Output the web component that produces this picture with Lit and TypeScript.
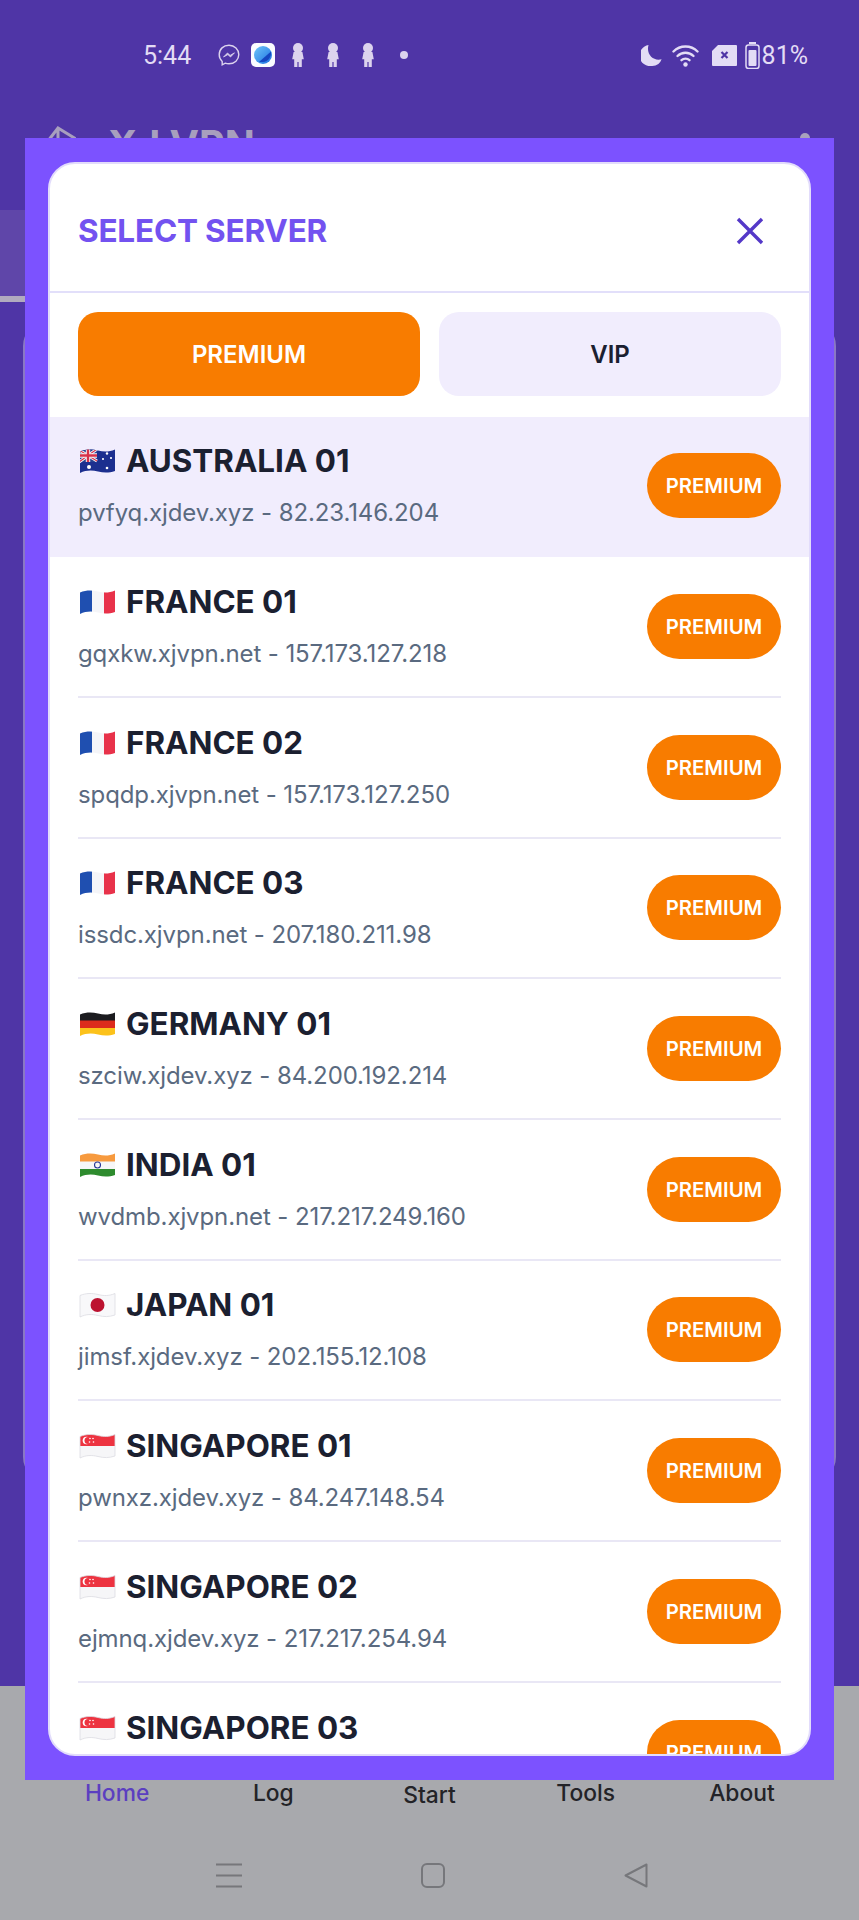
import { LitElement, html, css, svg } from "lit";
import { customElement } from "lit/decorators.js";

type Server = { code: string; name: string; host: string };

const SERVERS: Server[] = [
  { code: "au", name: "AUSTRALIA 01", host: "pvfyq.xjdev.xyz - 82.23.146.204" },
  { code: "fr", name: "FRANCE 01", host: "gqxkw.xjvpn.net - 157.173.127.218" },
  { code: "fr", name: "FRANCE 02", host: "spqdp.xjvpn.net - 157.173.127.250" },
  { code: "fr", name: "FRANCE 03", host: "issdc.xjvpn.net - 207.180.211.98" },
  { code: "de", name: "GERMANY 01", host: "szciw.xjdev.xyz - 84.200.192.214" },
  { code: "in", name: "INDIA 01", host: "wvdmb.xjvpn.net - 217.217.249.160" },
  { code: "jp", name: "JAPAN 01", host: "jimsf.xjdev.xyz - 202.155.12.108" },
  { code: "sg", name: "SINGAPORE 01", host: "pwnxz.xjdev.xyz - 84.247.148.54" },
  { code: "sg", name: "SINGAPORE 02", host: "ejmnq.xjdev.xyz - 217.217.254.94" },
  { code: "sg", name: "SINGAPORE 03", host: "" },
];

const WAVE = "M1 3.5C7 1 13 1 19 2.5S30 4 36 1.5V23C30 25 25 25 19 23.5S7 22 1 25Z";

function flagBody(code: string) {
  switch (code) {
    case "au":
      return svg`<rect width="37" height="26" fill="#1c2f8f"/>
        <rect width="18" height="14" fill="#27408f"/>
        <path d="M0 2L18 13M18 1L0 14" stroke="#f4f4f8" stroke-width="3"/>
        <path d="M0 2L18 13M18 1L0 14" stroke="#d8324a" stroke-width="1.1"/>
        <path d="M9 0V14M0 7.5H18" stroke="#f4f4f8" stroke-width="4.4"/>
        <path d="M9 0V14M0 7.5H18" stroke="#d8324a" stroke-width="2.4"/>
        <circle cx="10" cy="19" r="2" fill="#fff"/><circle cx="28" cy="5.5" r="1.2" fill="#fff"/>
        <circle cx="24" cy="11" r="1.1" fill="#fff"/><circle cx="32" cy="10" r="1.1" fill="#fff"/>
        <circle cx="28" cy="20" r="1.3" fill="#fff"/>`;
    case "fr":
      return svg`<rect width="13" height="26" fill="#1f4fb0"/><rect x="13" width="12" height="26" fill="#f5f5f8"/><rect x="25" width="12" height="26" fill="#e8324a"/>`;
    case "de":
      return svg`<rect width="37" height="10" fill="#1b1b1f"/><rect y="9.5" width="37" height="8" fill="#dd2b1c"/><rect y="17" width="37" height="9" fill="#fcc21b"/>`;
    case "in":
      return svg`<rect width="37" height="10" fill="#f79a3e"/><rect y="9.5" width="37" height="8" fill="#f6f6f8"/><rect y="17" width="37" height="9" fill="#2e8b2e"/><circle cx="18.5" cy="13" r="3" fill="none" stroke="#2a3a9a" stroke-width="1.1"/>`;
    case "jp":
      return svg`<rect width="37" height="26" fill="#f8f8fa"/><circle cx="18.5" cy="13" r="7" fill="#bc1230"/>`;
    default:
      return svg`<rect width="37" height="13.5" fill="#ed3340"/><rect y="13" width="37" height="13" fill="#f6f6f8"/>
        <circle cx="7.5" cy="7.5" r="3.8" fill="#fff"/><circle cx="9" cy="7.5" r="3.5" fill="#ed3340"/>
        <circle cx="11" cy="5.5" r=".8" fill="#fff"/><circle cx="14" cy="5.5" r=".8" fill="#fff"/><circle cx="10.5" cy="9" r=".8" fill="#fff"/><circle cx="14.5" cy="9" r=".8" fill="#fff"/>`;
  }
}

function flag(code: string) {
  const border = code === "jp" || code === "sg";
  return html`<svg class="flag" viewBox="0 0 37 26" width="37" height="26" aria-hidden="true">
    <defs><clipPath id=${"wave-" + code}><path d=${WAVE}></path></clipPath></defs>
    <g clip-path=${"url(#wave-" + code + ")"}>${flagBody(code)}</g>
    ${border ? svg`<path d=${WAVE} fill="none" stroke="#dcdce2" stroke-width=".8"/>` : ""}
  </svg>`;
}

const person = html`<svg class="si" width="16" height="24" viewBox="0 0 16 24" aria-hidden="true">
  <circle cx="8" cy="5" r="5" fill="#dcd3ee"/>
  <path d="M3.6 9h8.8l1.4 7.2h-2V24H8.6v-5H7.4v5H4.2v-7.8h-2Z" fill="#dcd3ee"/>
</svg>`;

@customElement("app-root")
export class AppRoot extends LitElement {
  static styles = css`
    :host {
      display: block;
      position: relative;
      width: 859px;
      height: 1920px;
      overflow: hidden;
      font-family: Inter, "Noto Sans", sans-serif;
      background: #a8a9ad;
    }
    .base {
      height: 1920px;
      display: flex;
      flex-direction: column;
    }
    .screen {
      height: 1686px;
      background: #4f35a6;
      display: flex;
      flex-direction: column;
    }
    .status {
      height: 110px;
      flex: none;
      display: flex;
      align-items: center;
      padding: 0 51px 0 143px;
      color: #e3dcf5;
      font-family: Roboto, sans-serif;
      font-size: 25px;
    }
    .status svg { display: block; flex: none; }
    .left, .right { display: flex; align-items: center; }
    .time { width: 75px; }
    .right { margin-left: auto; }
    .g9 { margin-right: 10px; }
    .g11 { margin-right: 12px; }
    .g8 { margin-right: 8px; }
    .g2 { margin-right: 2px; }
    .msg { margin-right: 11px; }
    .appicon { margin-right: 15px; }
    .sp19 { width: 19px; }
    .sp23 { width: 24px; }
    .appbar {
      height: 100px;
      flex: none;
      display: flex;
      align-items: flex-start;
      padding: 13px 49px 0 46px;
      gap: 32px;
      color: #a89fbe;
      font-size: 39.5px;
      font-weight: 700;
      line-height: 44px;
      box-sizing: border-box;
    }
    .appbar .dots { margin-left: auto; width: 10px; height: 10px; margin-top: 10px; border-radius: 50%; background: #a9a1bd; }
    .banner {
      height: 86px;
      flex: none;
      background: #5f46a9;
      border-bottom: 6px solid #b1aabf;
      margin-right: 120px;
    }
    .panel {
      margin: 20px 23px 0;
      height: 1155px;
      border: 2px solid #8a78c4;
      border-radius: 24px;
      flex: none;
    }
    .nav {
      display: grid;
      grid-template-columns: repeat(5, 1fr);
      padding: 93px 39px 0;
      font-size: 22.8px;
      font-weight: 500;
      line-height: 28px;
      color: #232327;
      text-align: center;
    }
    .nav .on { color: #5b3fc0; }
    .nav .start { padding-top: 2px; }
    .sys {
      display: flex;
      justify-content: space-between;
      padding: 54px 211px 0 216px;
    }
    .overlay {
      position: absolute;
      left: 25px;
      top: 138px;
      width: 809px;
      height: 1642px;
      box-sizing: border-box;
      padding: 24px 23px;
      background: #7c52ff;
    }
    .card {
      box-sizing: border-box;
      height: 100%;
      background: #fff;
      border: 2px solid #e2dcfb;
      border-radius: 27px;
      overflow: hidden;
    }
    .head {
      height: 129px;
      box-sizing: border-box;
      border-bottom: 2px solid #e2dffa;
      display: flex;
      align-items: center;
      justify-content: space-between;
      padding: 6px 45px 0 28px;
    }
    .title {
      font-size: 31.5px;
      font-weight: 700;
      color: #7352f0;
      letter-spacing: -0.2px;
    }
    .close { display: block; }
    .tabs {
      display: grid;
      grid-template-columns: 1fr 1fr;
      gap: 19px;
      padding: 19px 28px 20.5px;
    }
    .tab {
      height: 84px;
      border-radius: 20px;
      display: flex;
      align-items: center;
      justify-content: center;
      font-size: 24px;
      font-weight: 600;
    }
    .tab.active { background: #f87c00; color: #fff; }
    .tab.idle { background: #f1edfd; color: #1b2030; }
    .row {
      height: 140.7px;
      box-sizing: border-box;
      padding: 0 28px;
    }
    .row.sel { background: #f1edfd; }
    .row-in {
      height: 100%;
      box-sizing: border-box;
      border-bottom: 2px solid #e9e7f5;
      display: flex;
      align-items: center;
      justify-content: space-between;
    }
    .row.sel .row-in { border-bottom-color: #f1edfd; }
    .name {
      display: flex;
      align-items: center;
      gap: 10px;
      font-size: 31.4px;
      line-height: 36px;
      font-weight: 700;
      color: #1b2030;
      padding-left: 1px;
    }
    .flag { display: block; flex: none; }
    .host {
      margin-top: 19px;
      min-height: 30px;
      font-size: 24px;
      line-height: 30px;
      color: #5a6a80;
      letter-spacing: -0.1px;
    }
    .pill {
      width: 134px;
      height: 65px;
      border-radius: 33px;
      background: #f87c00;
      color: #fff;
      font-size: 20.3px;
      font-weight: 600;
      display: flex;
      align-items: center;
      justify-content: center;
    }
  `;

  render() {
    return html`
      <div class="base">
        <div class="screen">
          <div class="status">
            <div class="left">
              <span class="time">5:44</span>
              <svg class="msg" width="22" height="22" viewBox="0 0 22 22" aria-hidden="true">
                <path d="M11 1.2C5.4 1.2 1.2 5.2 1.2 10.6c0 2.8 1.1 5.2 3 6.9v3.3l3-1.6c1.1.4 2.4.6 3.8.6 5.6 0 9.8-4 9.8-9.2S16.6 1.2 11 1.2Z" fill="none" stroke="#dcd3ee" stroke-width="1.4"/>
                <path d="M5.5 13l4-4 2.6 2.4 4.4-2.6-4 4.2-2.6-2.4Z" fill="#dcd3ee" stroke="#dcd3ee" stroke-width=".8" stroke-linejoin="round"/>
              </svg>
              <svg class="appicon" width="24" height="24" viewBox="0 0 24 24" aria-hidden="true">
                <defs><linearGradient id="ag" x1="0" y1="0" x2="1" y2="1"><stop offset="0" stop-color="#6ec6fa"/><stop offset="1" stop-color="#1b6fe0"/></linearGradient></defs>
                <rect width="24" height="24" rx="5" fill="#fbfcff"/>
                <circle cx="12" cy="12" r="9" fill="url(#ag)"/>
                <path d="M8 19 20 8.5c.8 5-3 10.500-8 10.500Z" fill="#1547c0"/>
              </svg>
              ${person}
              <span class="sp19"></span>
              ${person}
              <span class="sp19"></span>
              ${person}
              <span class="sp23"></span>
              <svg width="8" height="8" viewBox="0 0 8 8" aria-hidden="true"><circle cx="4" cy="4" r="4" fill="#dcd3ee"/></svg>
            </div>
            <div class="right">
              <svg class="g9" width="21" height="22" viewBox="0 0 21 22" aria-hidden="true">
                <path d="M7.500 1A10.300 10.300 0 0 0 10.800 22a10.200 10.200 0 0 0 9.800-6.800C13 17.500 4.800 11 7.500 1Z" fill="#e3dcf5"/>
              </svg>
              <svg class="g11" width="28" height="23" viewBox="0 0 28 23" aria-hidden="true">
                <g fill="none" stroke="#e3dcf5" stroke-width="2.400" stroke-linecap="round">
                  <path d="M1.500 7.500a17 17 0 0 1 24 0"/><path d="M5.500 12a11.500 11.500 0 0 1 16 0"/><path d="M9.500 16.200a6 6 0 0 1 8 0"/>
                </g>
                <circle cx="13.500" cy="20.500" r="2.200" fill="#e3dcf5"/>
              </svg>
              <svg class="g8" width="25" height="21" viewBox="0 0 25 21" aria-hidden="true">
                <path d="M6 0H24a1 1 0 0 1 1 1V20a1 1 0 0 1-1 1H1a1 1 0 0 1-1-1V6Z" fill="#e3dcf5"/>
                <path d="M9.500 7l6 6M15.500 7l-6 6" stroke="#4f35a6" stroke-width="2.200"/>
              </svg>
              <svg class="g2" width="15" height="27" viewBox="0 0 15 27" aria-hidden="true">
                <rect x="4" y="0" width="7" height="2" fill="#e3dcf5"/>
                <rect x="1" y="3" width="13" height="23.500" rx="2.500" fill="none" stroke="#e3dcf5" stroke-width="1.500"/>
                <rect x="3.500" y="8" width="8" height="16" rx="1" fill="#e3dcf5"/>
              </svg>
              <span>81%</span>
            </div>
          </div>
          <div class="appbar">
            <svg width="30" height="40" viewBox="0 0 30 40" aria-hidden="true">
              <path d="M2 18 12 5l18 11M12 5v14" fill="none" stroke="#a89fbe" stroke-width="3"/>
            </svg>
            <span>XJ VPN</span>
            <span class="dots"></span>
          </div>
          <div class="banner"></div>
          <div class="panel"></div>
        </div>
        <div class="nav">
          <span class="on">Home</span><span>Log</span><span class="start">Start</span><span>Tools</span><span>About</span>
        </div>
        <div class="sys">
          <svg width="26" height="25" viewBox="0 0 26 25" aria-hidden="true">
            <path d="M0 1.500H26M0 12.500H26M0 23.500H26" stroke="#76777b" stroke-width="2"/>
          </svg>
          <svg width="24" height="25" viewBox="0 0 24 25" aria-hidden="true">
            <rect x="1" y="1" width="22" height="23" rx="5" fill="none" stroke="#76777b" stroke-width="2"/>
          </svg>
          <svg width="24" height="25" viewBox="0 0 24 25" aria-hidden="true">
            <path d="M22.500 1.500V23.500L1.500 12.500Z" fill="none" stroke="#76777b" stroke-width="2" stroke-linejoin="round"/>
          </svg>
        </div>
      </div>

      <div class="overlay">
        <div class="card">
          <div class="head">
            <span class="title">SELECT SERVER</span>
            <svg class="close" width="28" height="28" viewBox="0 0 28 28" aria-hidden="true">
              <path d="M2 2 26 26M26 2 2 26" stroke="#5438c8" stroke-width="3.400"/>
            </svg>
          </div>
          <div class="tabs">
            <div class="tab active">PREMIUM</div>
            <div class="tab idle">VIP</div>
          </div>
          ${SERVERS.map(
            (s, i) => html`
              <div class="row ${i === 0 ? "sel" : ""}">
                <div class="row-in">
                  <div>
                    <div class="name">${flag(s.code)}<span>${s.name}</span></div>
                    <div class="host">${s.host}</div>
                  </div>
                  <div class="pill">PREMIUM</div>
                </div>
              </div>
            `
          )}
        </div>
      </div>
    `;
  }
}
